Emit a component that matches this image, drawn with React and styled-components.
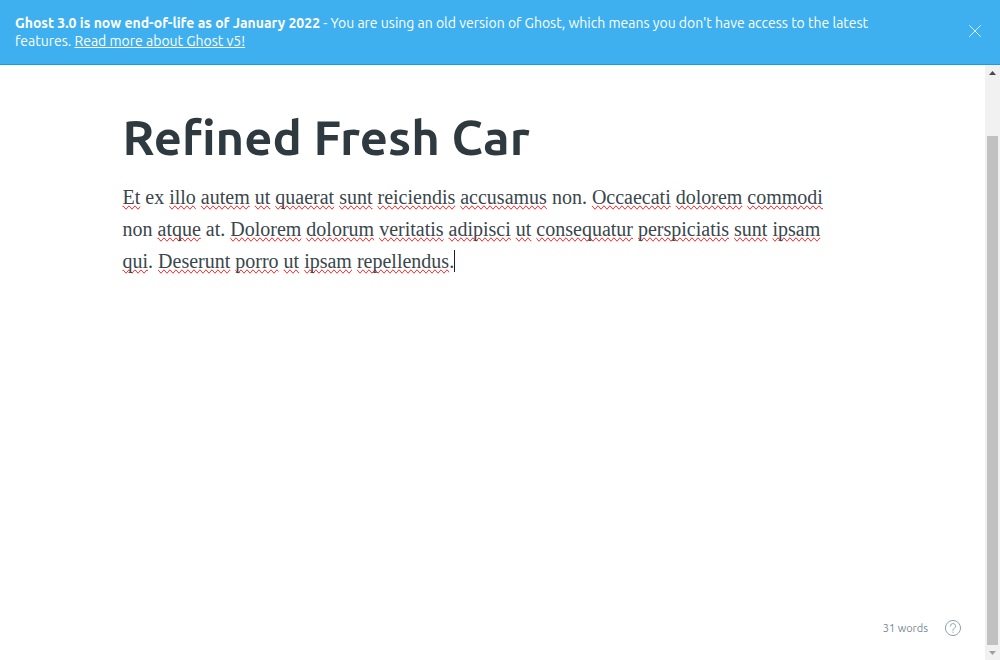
import React, { useState } from "react";
import styled, { createGlobalStyle } from "styled-components";

const sans = 'Ubuntu, "Noto Sans", "Open Sans", sans-serif';
const serif = '"Liberation Serif", "Times New Roman", serif';

const GlobalStyle = createGlobalStyle`
  *, *::before, *::after { box-sizing: border-box; }
  body { margin: 0; background: #fff; color: #2f3a40; font-family: ${sans}; }
`;

const Page = styled.div`
  display: flex;
  flex-direction: column;
  height: 100vh;
`;

const Banner = styled.aside`
  display: flex;
  align-items: center;
  gap: 48px;
  padding: 14px 15px;
  border-bottom: 1px solid #139bee;
  background: #3eb0ef;
  color: #fff;
`;

const BannerText = styled.p`
  flex: 1;
  margin: 0;
  font-size: 14px;
  line-height: 18px;
`;

const BannerLink = styled.a`
  color: inherit;
  text-decoration: underline;
`;

const CloseButton = styled.button`
  display: flex;
  flex: none;
  margin: 0 0 2px;
  padding: 4px;
  border: 0;
  background: none;
  color: inherit;
  cursor: pointer;
`;

const Workspace = styled.div`
  display: flex;
  flex: 1;
  min-height: 0;
`;

const Editor = styled.main`
  display: flex;
  flex: 1;
  flex-direction: column;
  min-width: 0;
`;

const Post = styled.article`
  flex: 1;
  width: 100%;
  max-width: 740px;
  margin: 0 auto;
  padding-top: 44px;
`;

const TitleInput = styled.input`
  display: block;
  width: 100%;
  height: 56px;
  margin: 0 0 16px;
  padding: 0;
  border: 0;
  outline: 0;
  background: none;
  color: #2f3a40;
  font-family: ${sans};
  font-size: 49px;
  font-weight: 700;
  line-height: 56px;
`;

const Body = styled.div`
  max-width: 720px;
  outline: 0;
  color: #3a464c;
  font-family: ${serif};
  font-size: 20px;
  line-height: 32px;

  p { margin: 0; }
`;

const Misspelt = styled.span`
  text-decoration-line: spelling-error;
`;

const Caret = styled.span`
  display: inline-block;
  width: 1px;
  height: 22px;
  background: #15212a;
  vertical-align: -4px;
`;

const StatusBar = styled.footer`
  display: flex;
  align-items: center;
  justify-content: flex-end;
  gap: 16px;
  padding: 0 23px 23px;
  color: #738a94;
  font-size: 11px;
  line-height: 18px;
`;

const HelpLink = styled.a`
  display: flex;
  color: #8fa3ad;
`;

const ScrollTrack = styled.div`
  display: flex;
  flex: none;
  flex-direction: column;
  align-items: center;
  width: 15px;
  background: #f1f1f1;
`;

const ScrollArrow = styled.span`
  display: flex;
  align-items: center;
  justify-content: center;
  height: 15px;
  color: ${(p) => (p.$dim ? "#a0a0a0" : "#4a4a4a")};
`;

const ScrollThumb = styled.div`
  flex: 1;
  width: 11px;
  margin-top: 56px;
  background: #c1c1c1;
`;

const text =
  "*Et ex *illo *autem *ut *quaerat *sunt *reiciendis *accusamus non. *Occaecati *dolorem *commodi non *atque at. *Dolorem *dolorum *veritatis *adipisci *ut *consequatur *perspiciatis *sunt *ipsam *qui. *Deserunt *porro *ut *ipsam *repellendus.";

// Words that start with an asterisk carry the spelling mark; full stops stay outside it.
const words = text.split(" ").map((word) => {
  const marked = word.startsWith("*");
  const bare = word.replace("*", "");
  const stop = bare.endsWith(".") ? "." : "";
  return { marked, stem: stop ? bare.slice(0, -1) : bare, stop };
});

export default function App() {
  const [title, setTitle] = useState("Refined Fresh Car");
  return (
    <Page>
      <GlobalStyle />
      <Banner>
        <BannerText>
          <strong>Ghost 3.0 is now end-of-life as of January 2022</strong> - You are using an old
          version of Ghost, which means you don't have access to the latest features.{" "}
          <BannerLink href="#v5">Read more about Ghost v5!</BannerLink>
        </BannerText>
        <CloseButton type="button" aria-label="Close">
          <svg width="12" height="12" viewBox="0 0 12 12" fill="none" stroke="currentColor" strokeLinecap="round">
            <path d="M.5.5l11 11M11.5.5l-11 11" strokeWidth=".8" />
          </svg>
        </CloseButton>
      </Banner>
      <Workspace>
        <Editor>
          <Post>
            <TitleInput
              aria-label="Post title"
              value={title}
              spellCheck={false}
              onChange={(e) => setTitle(e.target.value)}
            />
            <Body role="textbox" aria-label="Post content" contentEditable suppressContentEditableWarning spellCheck={false}>
              <p>
                {words.map((w, i) => (
                  <React.Fragment key={i}>
                    {i > 0 && " "}
                    {w.marked ? <Misspelt>{w.stem}</Misspelt> : w.stem}
                    {w.stop}
                  </React.Fragment>
                ))}
                <Caret />
              </p>
            </Body>
          </Post>
          <StatusBar>
            <span>31 words</span>
            <HelpLink href="#help" aria-label="Help">
              <svg width="18" height="18" viewBox="0 0 18 18" fill="none" stroke="currentColor" strokeLinecap="round">
                <circle cx="9" cy="9" r="7.6" />
                <path d="M6.4 7.1a2.6 2.6 0 1 1 3.7 2.4c-.7.3-1.1.8-1.1 1.4v.4" />
                <circle cx="9" cy="13.2" r=".6" fill="currentColor" stroke="none" />
              </svg>
            </HelpLink>
          </StatusBar>
        </Editor>
        <ScrollTrack aria-hidden="true">
          <ScrollArrow>
            <svg width="7" height="4" viewBox="0 0 7 4" fill="currentColor"><path d="M0 4L3.5 0L7 4z" /></svg>
          </ScrollArrow>
          <ScrollThumb />
          <ScrollArrow $dim>
            <svg width="7" height="4" viewBox="0 0 7 4" fill="currentColor"><path d="M0 0L3.5 4L7 0z" /></svg>
          </ScrollArrow>
        </ScrollTrack>
      </Workspace>
    </Page>
  );
}
